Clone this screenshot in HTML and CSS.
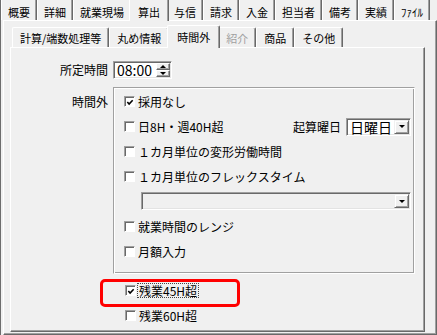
FILE: index.html
```html
<!DOCTYPE html>
<html lang="ja">
<head>
<meta charset="utf-8">
<link rel="stylesheet" href="styles.css">
</head>
<body>
<div class="win">
  <div class="tabs outer-tabs">
    <div class="tab">概要</div>
    <div class="tab">詳細</div>
    <div class="tab">就業現場</div>
    <div class="tab active">算出</div>
    <div class="tab">与信</div>
    <div class="tab">請求</div>
    <div class="tab">入金</div>
    <div class="tab">担当者</div>
    <div class="tab">備考</div>
    <div class="tab">実績</div>
    <div class="tab">ﾌｧｲﾙ</div>
  </div>
  <div class="panel outer-panel">
    <div class="tabs inner-tabs">
      <div class="tab">計算/端数処理等</div>
      <div class="tab">丸め情報</div>
      <div class="tab active">時間外</div>
      <div class="tab disabled">紹介</div>
      <div class="tab">商品</div>
      <div class="tab">その他</div>
    </div>
    <div class="panel inner-panel">
      <div class="form">
        <div class="lbl lbl-time">所定時間</div>
        <div class="spinbox">
          <span class="spin-text">08:00</span>
          <span class="spin">
            <span class="sbtn up"></span>
            <span class="sbtn down"></span>
          </span>
        </div>

        <div class="lbl lbl-group">時間外</div>
        <div class="group">
          <div class="chk-row">
            <span class="cb checked"><svg viewBox="0 0 9 9" width="9" height="9"><polyline points="1.5,4 3.5,6.2 7.5,2" fill="none" stroke="#000" stroke-width="1.8"/></svg></span>
            <span class="cb-text">採用なし</span>
          </div>
          <div class="chk-row">
            <span class="cb"></span>
            <span class="cb-text">日8H・週40H超</span>
            <div class="right">
              <span class="cb-text">起算曜日</span>
              <div class="select">
                <span class="select-text">日曜日</span>
                <span class="dd-btn"></span>
              </div>
            </div>
          </div>
          <div class="chk-row">
            <span class="cb"></span>
            <span class="cb-text">１カ月単位の変形労働時間</span>
          </div>
          <div class="chk-row">
            <span class="cb"></span>
            <span class="cb-text">１カ月単位のフレックスタイム</span>
          </div>
          <div class="combo">
            <span class="select-text"></span>
            <span class="dd-btn"></span>
          </div>
          <div class="chk-row">
            <span class="cb"></span>
            <span class="cb-text">就業時間のレンジ</span>
          </div>
          <div class="chk-row">
            <span class="cb"></span>
            <span class="cb-text">月額入力</span>
          </div>
        </div>

        <div class="extra">
          <div class="chk-row">
            <span class="cb checked tight"><svg viewBox="0 0 9 9" width="9" height="9"><polyline points="1.5,4 3.5,6.2 7.5,2" fill="none" stroke="#000" stroke-width="1.8"/></svg></span>
            <span class="cb-text focus">残業45H超</span>
          </div>
          <div class="chk-row">
            <span class="cb"></span>
            <span class="cb-text">残業60H超</span>
          </div>
        </div>
      </div>
      <div class="annot"></div>
    </div>
  </div>
</div>
</body>
</html>
```

FILE: styles.css
```css
* { box-sizing: border-box; }
html, body { margin: 0; padding: 0; }
body {
  width: 437px;
  height: 335px;
  overflow: hidden;
  background: #f0f0f0;
  font-family: "Noto Sans CJK JP", "Noto Sans", sans-serif;
  font-size: 12px;
  font-weight: 400;
  color: #000;
}
.win {
  height: 335px;
  border-left: 1px solid #6d6d6d;
  padding-left: 2px;
  display: flex;
  flex-direction: column;
}
.tabs {
  display: flex;
  align-items: flex-start;
  flex: none;
}
.tab {
  font-size: 11px;
  line-height: 14px;
  white-space: nowrap;
  background: #f0f0f0;
  border-left: 1px solid #fff;
  border-right: 1px solid #696969;
  box-shadow: inset -1px 0 #a0a0a0;
}
.outer-tabs {
  height: 20px;
  margin-left: -2px;
}
.outer-tabs .tab {
  height: 20px;
  padding: 5px 6px 0;
}
.outer-tabs .tab.active {
  height: 21px;
  margin: 0 -2px;
  padding: 5px 8px 0;
  position: relative;
  z-index: 1;
}
.inner-tabs {
  height: 22px;
  padding-left: 2px;
}
.inner-tabs .tab {
  height: 20px;
  margin-top: 2px;
  padding: 3px 7px 0;
  border-top: 1px solid #fff;
  border-radius: 2px 2px 0 0;
}
.inner-tabs .tab.active {
  height: 23px;
  margin: 0 -2px;
  padding: 4px 9px 0;
  position: relative;
  z-index: 1;
}
.inner-tabs .tab.disabled { color: #a0a0a0; }

.panel {
  border: 1px solid;
  border-color: #fff #696969 #696969 #fff;
  box-shadow: inset -1px -1px #a0a0a0;
}
.outer-panel {
  flex: 1;
  min-height: 0;
  padding: 4px 11px 2px 6px;
  display: flex;
  flex-direction: column;
}
.inner-panel {
  flex: 1;
  min-height: 0;
  position: relative;
}

.form {
  display: grid;
  grid-template-columns: 97px 302px;
  column-gap: 5px;
  align-items: start;
  padding-top: 13px;
}
.lbl {
  text-align: right;
  font-size: 12px;
}
.lbl-time { line-height: 18px; }
.lbl-group { line-height: 25px; margin-top: 10px; }

.spinbox, .select, .combo {
  display: flex;
  height: 18px;
  border: 1px solid;
  border-color: #a0a0a0 #fff #fff #a0a0a0;
  box-shadow: inset 1px 1px #696969, inset -1px -1px #e3e3e3;
  padding: 1px;
  background: #fff;
}
.spinbox { width: 59px; }
.spin-text, .select-text {
  flex: 1;
  font-size: 14px;
  line-height: 15px;
  padding-left: 2px;
  white-space: nowrap;
}
.spin {
  width: 14px;
  display: flex;
  flex-direction: column;
}
.sbtn {
  flex: 1;
  background: #f0f0f0;
  border: 1px solid;
  border-color: #fff #696969 #696969 #fff;
  box-shadow: inset -1px -1px #a0a0a0;
  display: flex;
  align-items: center;
  justify-content: center;
}
.sbtn.up::after {
  content: "";
  border-left: 3px solid transparent;
  border-right: 3px solid transparent;
  border-bottom: 3px solid #000;
}
.sbtn.down::after {
  content: "";
  border-left: 3px solid transparent;
  border-right: 3px solid transparent;
  border-top: 3px solid #000;
}

.group {
  margin-top: 8px;
  height: 187px;
  border: 1px solid;
  border-color: #a0a0a0 #fff #fff #a0a0a0;
  box-shadow: inset 1px 1px #fff, inset -1px -1px #a0a0a0;
  padding: 1px 3px 9px 10px;
}
.chk-row {
  display: flex;
  align-items: center;
  height: 25px;
}
.cb {
  width: 11px;
  height: 11px;
  flex: none;
  background: #fff;
  border: 1px solid;
  border-color: #a0a0a0 #fff #fff #a0a0a0;
  box-shadow: inset 1px 1px #696969;
  margin-right: 3px;
  display: flex;
  align-items: center;
  justify-content: center;
  padding: 1px 0 0 1px;
}
.cb svg { display: block; }
.cb.tight { margin-right: 1px; }
.cb-text {
  font-size: 12px;
  line-height: 14px;
  white-space: nowrap;
}
.cb-text.focus {
  border: 1px dotted #444;
  padding: 0 1px;
  line-height: 13px;
}
.right {
  margin-left: auto;
  display: flex;
  align-items: center;
  gap: 5px;
}
.select { width: 65px; }
.dd-btn {
  width: 15px;
  flex: none;
  background: #f0f0f0;
  border: 1px solid;
  border-color: #f0f0f0 #696969 #696969 #f0f0f0;
  box-shadow: inset 1px 1px #fff, inset -1px -1px #a0a0a0;
  display: flex;
  align-items: center;
  justify-content: center;
}
.dd-btn::after {
  content: "";
  border-left: 3px solid transparent;
  border-right: 3px solid transparent;
  border-top: 3px solid #000;
}
.combo {
  margin: 3px 0 4px 17px;
  background: #f0f0f0;
}

.extra {
  grid-column: 2;
  margin-top: 4px;
  padding-left: 12px;
}

.annot {
  position: absolute;
  left: 89px;
  top: 231px;
  width: 140px;
  height: 28px;
  border: 3px solid #ff0000;
  border-radius: 5px;
}
```
